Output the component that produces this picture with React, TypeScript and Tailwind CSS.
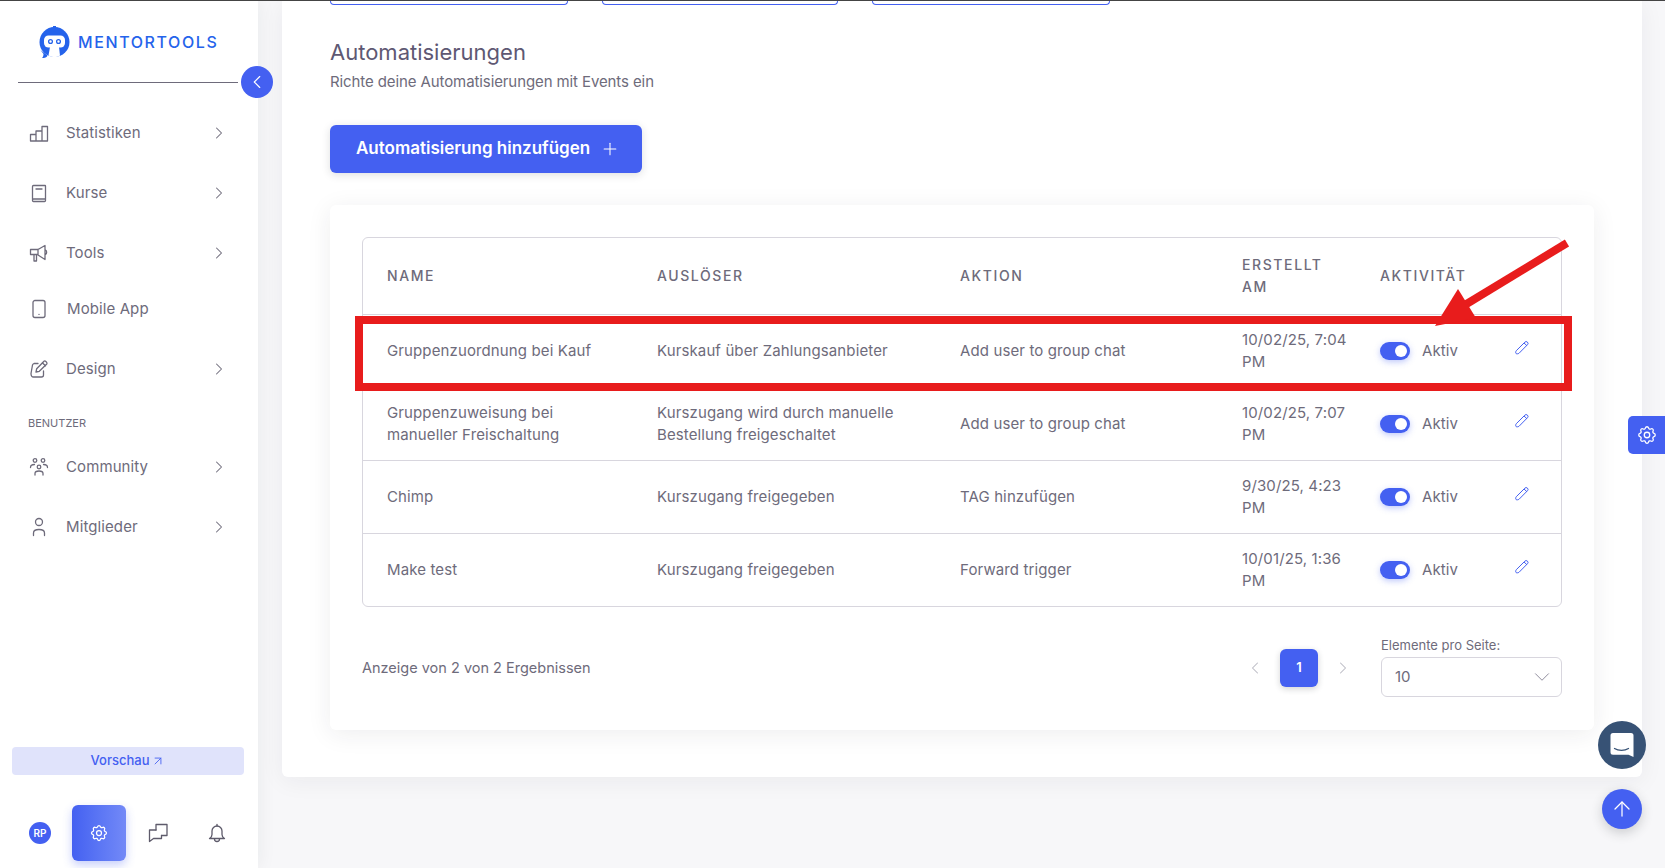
import { ChevronLeft, ChevronRight, ChevronDown, Plus, ArrowUp, ArrowUpRight } from "lucide-react";
import { TbSettings } from "react-icons/tb";
import type { ReactNode } from "react";

function Ico({ w = 20, h = 20, children, className = "" }: { w?: number; h?: number; children: ReactNode; className?: string }) {
  return (
    <svg width={w} height={h} viewBox={`0 0 ${w} ${h}`} fill="none" stroke="currentColor" strokeWidth="1.3" strokeLinecap="round" strokeLinejoin="round" className={className}>
      {children}
    </svg>
  );
}

const IconChart = () => (
  <Ico><path d="M1.500 18V11.500h5.500V18zM7 18V8h6v10zM13 18V3.500h5.500V18z" /></Ico>
);
const IconBook = () => (
  <Ico><path d="M3.500 16.500V3.500a1 1 0 0 1 1-1h11.500a.5.5 0 0 1 .5.5v14.500a1 1 0 0 1-1 1H4.500a1 1 0 0 1-1-1v-.5a1 1 0 0 1 1-1h12" /><path d="M7 6h6" /></Ico>
);
const IconMega = () => (
  <Ico><path d="M1.500 6.500h7.500v5H1.500zM5 11.500V18h2.500v-6.500M9 6.500l7-4v14l-7-4.500M16.500 7c1.500 .8 1.500 3.500 0 4.500" /></Ico>
);
const IconMobile = () => (
  <Ico><rect x="4" y="1.500" width="12" height="17" rx="2" /><path d="M10 15.300v.1" /></Ico>
);
const IconEdit = () => (
  <Ico><path d="M9 4.500H5a2.500 2.500 0 0 0-1.500 1.500L2 14.500c0 2 1 3.500 2.500 3.500h8a2 2 0 0 0 2-2v-4" /><path d="M7 13l.7-3.300 7.300-7.500c1-1 3.800 1.500 2.800 2.800l-7.500 7.300z" /><path d="M13.500 4l3 2.800" /></Ico>
);
const IconCommunity = () => (
  <Ico>
    <circle cx="6" cy="3.500" r="1.800" /><circle cx="14" cy="3.500" r="1.800" /><circle cx="10" cy="10" r="1.800" />
    <path d="M1.500 10.500c0-2 1.500-3 4-3M18.500 10.500c0-2-1.500-3-4-3M6 18v-1.500c0-1.500 1.500-2.500 4-2.500s4 1 4 2.500V18" />
  </Ico>
);
const IconUser = () => (
  <Ico><circle cx="10" cy="5" r="3.500" /><path d="M4.500 18.500v-2.500c0-2 2-3.500 5.500-3.500s5.500 1.500 5.500 3.500v2.500" /></Ico>
);
const IconChat = () => (
  <Ico w={20} h={20}><path d="M8 7V1.500h11v11h-5.500" /><path d="M8 7H1.500v11.500L5.500 15.500h8V12.500" /></Ico>
);
const IconBell = () => (
  <Ico w={20} h={20}><path d="M2.500 15.500c1.500-.8 2.500-2.500 2.500-4V8a5 5 0 0 1 10 0v3.500c0 1.500 1 3.200 2.500 4z" /><path d="M10 3V1.500" /><path d="M7.500 16a2.500 2.500 0 0 0 5 0" /></Ico>
);
const IconPencil = () => (
  <svg width="16" height="16" viewBox="0 0 16 16" fill="none" stroke="#4460f1" strokeWidth="1">
    <path d="M2.300 10.700L10.800 2.200a1.700 1.700 0 0 1 2.700 2.500l-8.500 8.600c-.8.600-2.500.700-3 .2s-.4-2 .3-2.800z" />
    <path d="M10 3l3 2.800" />
  </svg>
);

const nav = [
  { label: "Statistiken", Icon: IconChart, cls: "h-[60px]" },
  { label: "Kurse", Icon: IconBook, cls: "h-[60px]" },
  { label: "Tools", Icon: IconMega, cls: "h-[60px]" },
  { label: "Mobile App", Icon: IconMobile, cls: "h-[52px] mb-[4px]", noChevron: true, labelCls: "ml-[18px]" },
  { label: "Design", Icon: IconEdit, cls: "h-[60px]" },
];
const nav2 = [
  { label: "Community", Icon: IconCommunity, cls: "h-[60px]" },
  { label: "Mitglieder", Icon: IconUser, cls: "h-[60px]" },
];

const rows = [
  { name: "Gruppenzuordnung bei Kauf", trig: "Kurskauf über Zahlungsanbieter", act: "Add user to group chat", date: "10/02/25, 7:04 PM" },
  { name: "Gruppenzuweisung bei manueller Freischaltung", trig: "Kurszugang wird durch manuelle Bestellung freigeschaltet", act: "Add user to group chat", date: "10/02/25, 7:07 PM" },
  { name: "Chimp", trig: "Kurszugang freigegeben", act: "TAG hinzufügen", date: "9/30/25, 4:23 PM" },
  { name: "Make test", trig: "Kurszugang freigegeben", act: "Forward trigger", date: "10/01/25, 1:36 PM" },
];

function NavRow({ item }: { item: any }) {
  const { Icon } = item;
  return (
    <div className={`flex items-center pl-[29px] pr-[29px] text-[15px] tracking-[0.1px] text-[#6e6b7b] ${item.cls}`}>
      <Icon />
      <span className={`flex-1 ${item.labelCls ?? "ml-[17px]"}`}>{item.label}</span>
      {!item.noChevron && <ChevronRight size={20} strokeWidth={1.25} />}
    </div>
  );
}

function Logo() {
  return (
    <svg width="31" height="32" viewBox="0 0 31 32" className="shrink-0">
      <circle cx="15.500" cy="16" r="15" fill="#2563eb" />
      <path d="M14 0h3v1.500h1.500v2.500H17v1.500h-3V4h-1.500V1.500H14z" fill="#2563eb" />
      <rect x="5" y="9.500" width="21" height="12" rx="4.500" fill="#fff" />
      <path d="M11 21h9l1 8.500c-1.500 1-4 1.500-5.500 1.500s-4-.500-6-1.500z" fill="#fff" />
      <path d="M1.500 24l7 5.500-.5 1c-1 1-3 1.500-5 1.500 1-1 1.500-2.500 1.500-4z" fill="#2563eb" />
      <circle cx="11.500" cy="15.500" r="1.900" fill="none" stroke="#2563eb" strokeWidth="1.300" />
      <circle cx="19.500" cy="15.500" r="1.900" fill="none" stroke="#2563eb" strokeWidth="1.300" />
    </svg>
  );
}

export default function App() {
  return (
    <div className="relative flex h-screen overflow-hidden border-t border-[#444] bg-[#f7f7f9] font-['Inter','Liberation_Sans',sans-serif] text-[#6e6b7b]">
      <aside className="relative flex w-[258px] shrink-0 flex-col bg-white shadow-[0_0_18px_rgba(34,41,47,0.07)]">
        <div className="mx-[18px] flex h-[82px] w-[220px] items-start border-b border-[#6e6b7b] pl-[21px] pt-[25px]">
          <Logo />
          <span className="ml-[8px] mt-[6px] text-[16px] font-medium leading-[20px] tracking-[1.600px] text-[#2563eb]">MENTORTOOLS</span>
        </div>
        <div className="pt-[20px]">
          {nav.map((n) => <NavRow key={n.label} item={n} />)}
        </div>
        <div className="pb-[6px] pl-[28px] pt-[16px] text-[11px] leading-[16px] text-[#6e6b7b]">BENUTZER</div>
        <div>
          {nav2.map((n) => <NavRow key={n.label} item={n} />)}
        </div>
        <div className="mt-auto ml-[12px] w-[232px]">
          <div className="flex h-[28px] items-center justify-center gap-[2px] rounded-[4px] bg-[#e0e3fb] text-[13px] font-medium text-[#4460f1]">
            Vorschau <ArrowUpRight size={14} strokeWidth={1.5} />
          </div>
        </div>
        <div className="flex h-[93px] items-start pl-[29px] pt-[30px]">
          <div className="mt-[17px] flex h-[22px] w-[22px] items-center justify-center rounded-full bg-[#4460f1] text-[10px] font-semibold text-white">RP</div>
          <div className="ml-[21px] flex h-[56px] w-[54px] items-center justify-center rounded-[6px] bg-gradient-to-r from-[#4460f1] to-[#7389f7] text-white shadow-[0_4px_10px_rgba(68,96,241,0.3)]">
            <TbSettings size={20} strokeWidth={1.5} />
          </div>
          <div className="ml-[22px] mt-[18px] text-[#5e5b6b]"><IconChat /></div>
          <div className="ml-[39px] mt-[18px] text-[#5e5b6b]"><IconBell /></div>
        </div>
      </aside>

      <main className="min-w-0 flex-1 self-start pl-[24px] pr-[23px]">
        <div className="rounded-b-[6px] bg-white px-[48px] pb-[47px] shadow-[0_4px_24px_rgba(34,41,47,0.06)]">
          <div className="flex gap-[34px]">
            <div className="h-[4px] w-[238px] rounded-b-[6px] border border-t-0 border-[#4460f1]" />
            <div className="h-[4px] w-[236px] rounded-b-[6px] border border-t-0 border-[#4460f1]" />
            <div className="h-[4px] w-[238px] rounded-b-[6px] border border-t-0 border-[#4460f1]" />
          </div>
          <h1 className="mt-[33px] text-[22px] font-normal leading-[28px] text-[#5e5873]">Automatisierungen</h1>
          <p className="mt-[5px] text-[15px] leading-[22px] tracking-[-0.1px]">Richte deine Automatisierungen mit Events ein</p>
          <button className="mt-[32px] flex h-[48px] w-[312px] items-center gap-[10px] rounded-[6px] bg-[#4460f1] pl-[26px] text-[17px] font-semibold text-white shadow-[0_2px_8px_rgba(34,41,47,0.15)]">
            Automatisierung hinzufügen <Plus size={20} strokeWidth={1.25} />
          </button>
          <section className="mt-[32px] rounded-[6px] bg-white px-[32px] pb-[33px] pt-[32px] shadow-[0_4px_24px_rgba(34,41,47,0.08)]">
            <div className="overflow-hidden rounded-[6px] border border-[#d8d6de]">
              <table className="w-full table-fixed border-collapse text-left text-[15px] leading-[22px] tracking-[0.12px]">
                <colgroup>
                  <col className="w-[270px]" /><col className="w-[303px]" /><col className="w-[282px]" /><col className="w-[138px]" /><col className="w-[158px]" /><col />
                </colgroup>
                <thead>
                  <tr className="h-[76px] border-b border-[#d8d6de]">
                    {["Name", "Auslöser", "Aktion", "Erstellt am", "Aktivität"].map((h) => (
                      <th key={h} className="px-[24px] text-[14px] font-medium uppercase tracking-[1.600px] text-[#6e6b7b] last:pr-0">{h}</th>
                    ))}
                    <th />
                  </tr>
                </thead>
                <tbody>
                  {rows.map((r) => (
                    <tr key={r.name} className="h-[73px] border-b border-[#d8d6de] last:border-b-0">
                      <td className="px-[24px]">{r.name}</td>
                      <td className="px-[24px]">{r.trig}</td>
                      <td className="px-[24px]">{r.act}</td>
                      <td className="pl-[24px] pr-[4px]">{r.date}</td>
                      <td className="pl-[24px]">
                        <div className="flex items-center gap-[12px]">
                          <div className="flex h-[18px] w-[30px] items-center justify-end rounded-full bg-[#4460f1] pr-[3px] shadow-[0_2px_6px_rgba(68,96,241,0.35)]">
                            <div className="h-[12px] w-[12px] rounded-full bg-white" />
                          </div>
                          Aktiv
                        </div>
                      </td>
                      <td><div className="-mt-[5px]"><IconPencil /></div></td>
                    </tr>
                  ))}
                </tbody>
              </table>
            </div>
            <div className="mt-[30px] flex items-start">
              <span className="mt-[20px] flex-1 text-[14.500px] leading-[22px]">Anzeige von 2 von 2 Ergebnissen</span>
              <div className="mt-[12px] flex items-center">
                <ChevronLeft size={20} strokeWidth={1.25} className="text-[#b9b9c3]" />
                <div className="ml-[15px] flex h-[38px] w-[38px] items-center justify-center rounded-[6px] bg-[#4460f1] text-[13px] font-semibold text-white shadow-[0_2px_6px_rgba(34,41,47,0.2)]">1</div>
                <ChevronRight size={20} strokeWidth={1.25} className="ml-[15px] text-[#b9b9c3]" />
              </div>
              <div className="ml-[28px] w-[181px]">
                <div className="text-[13px] leading-[16px]">Elemente pro Seite:</div>
                <div className="mt-[4px] flex h-[40px] items-center justify-between rounded-[6px] border border-[#d8d6de] pl-[13px] pr-[6px] text-[15px]">
                  10 <ChevronDown size={26} strokeWidth={0.9} className="text-[#8e8b9b]" />
                </div>
              </div>
            </div>
          </section>
        </div>
      </main>

      <button className="absolute left-[241px] top-[65px] flex h-[32px] w-[32px] items-center justify-center rounded-full bg-[#4460f1] text-white">
        <ChevronLeft size={22} strokeWidth={1.25} />
      </button>
      <div className="absolute left-[355px] top-[315px] h-[75px] w-[1217px] border-[8px] border-[#e81c1c]" />
      <svg className="absolute left-0 top-0" width="1665" height="868">
        <line x1="1567" y1="242" x2="1450" y2="313" stroke="#e81c1c" strokeWidth="8" />
        <polygon points="1435,325 1458,288 1476,317" fill="#e81c1c" />
      </svg>
      <div className="absolute left-[1628px] top-[415px] flex h-[38px] w-[37px] items-center justify-center rounded-l-[5px] bg-[#4460f1] text-white">
        <TbSettings size={22} strokeWidth={1.4} />
      </div>
      <div className="absolute left-[1598px] top-[720px] flex h-[48px] w-[48px] items-center justify-center rounded-full bg-[#375275]">
        <svg width="24" height="26" viewBox="0 0 24 26">
          <path d="M3 1h18a2.500 2.500 0 0 1 2.500 2.500V25l-5-2.200H3A2.500 2.500 0 0 1 .5 20.300V3.500A2.500 2.500 0 0 1 3 1z" fill="#fff" />
          <path d="M4.500 16.500c4 2.500 10 2.500 14 0" fill="none" stroke="#375275" strokeWidth="1.300" strokeLinecap="round" />
        </svg>
      </div>
      <div className="absolute left-[1602px] top-[788px] flex h-[40px] w-[40px] items-center justify-center rounded-full bg-[#4460f1] text-white shadow-[0_4px_12px_rgba(34,41,47,0.2)]">
        <ArrowUp size={24} strokeWidth={1.25} />
      </div>
    </div>
  );
}
